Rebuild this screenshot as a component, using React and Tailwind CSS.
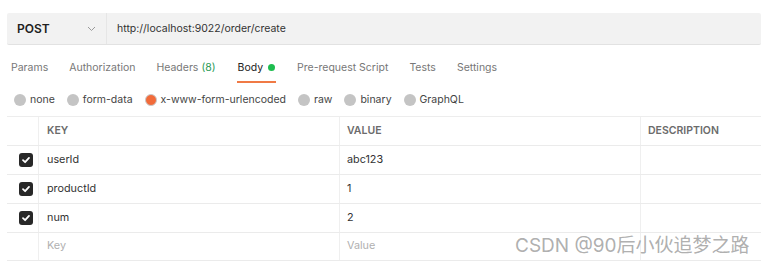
import React from "react";

const Check = () => (
  <div className="w-[14px] h-[14px] rounded-[3px] bg-[#282828] flex items-center justify-center">
    <svg width="10" height="10" viewBox="0 0 10 10" fill="none">
      <path d="M2 5.2 L4.1 7.2 L8 2.9" stroke="white" strokeWidth="1.8" strokeLinecap="round" strokeLinejoin="round" />
    </svg>
  </div>
);

const Radio = ({ label, active }) => (
  <div className="flex items-center gap-[4px]">
    {active ? (
      <div className="w-[12px] h-[12px] rounded-full bg-[#f26b3a] border border-[#c9c9c9]" />
    ) : (
      <div className="w-[12px] h-[12px] rounded-full bg-[#c4c4c4]" />
    )}
    <span>{label}</span>
  </div>
);

const rows = [
  { k: "userId", v: "abc123" },
  { k: "productId", v: "1" },
  { k: "num", v: "2" },
];

export default function App() {
  return (
    <div
      className="relative w-[766px] h-[267px] bg-white text-[#333] overflow-hidden"
      style={{ fontFamily: "Inter, 'Noto Sans', sans-serif" }}
    >
      <div className="pt-[13px] px-[7px] pr-[5px]">
        <div className="flex h-[32px] bg-[#f2f2f2] border-b border-[#e2e2e2] rounded-[2px]">
          <div className="w-[100px] flex items-center justify-between pl-[10px] pr-[10px] border-r border-[#e6e6e6]">
            <span className="text-[12px] font-semibold text-[#212121]">POST</span>
            <svg width="9" height="6" viewBox="0 0 9 6" fill="none">
              <path d="M1 1 L4.5 4.5 L8 1" stroke="#9a9a9a" strokeWidth="1" />
            </svg>
          </div>
          <div className="flex items-center pl-[10px] text-[10.5px] text-[#333]">
            http://localhost:9022/order/create
          </div>
        </div>
      </div>

      <div className="flex items-start h-[38px] pl-[11px] pt-[15px] gap-[21px] text-[10.5px] text-[#777]">
        <span>Params</span>
        <span>Authorization</span>
        <span>
          Headers <span className="text-[#2b9a56]">(8)</span>
        </span>
        <div className="flex flex-col items-stretch">
          <span className="text-[#222] flex items-center gap-[5px] px-[1px]">
            Body <span className="inline-block w-[7px] h-[7px] rounded-full bg-[#1ebd4f]" />
          </span>
          <div className="mt-[5px] h-[2px] bg-[#f07a45]" />
        </div>
        <span>Pre-request Script</span>
        <span>Tests</span>
        <span>Settings</span>
      </div>

      <div className="mt-[2px] flex items-center h-[30px] pl-[14px] gap-[12px] text-[10.5px] text-[#444]">
        <Radio label="none" />
        <Radio label="form-data" />
        <Radio label="x-www-form-urlencoded" active />
        <Radio label="raw" />
        <Radio label="binary" />
        <Radio label="GraphQL" />
      </div>

      <div className="mt-[1px] ml-[7px] mr-[5px] border-t border-[#ededed] text-[10.8px]">
        <div className="grid grid-cols-[32px_301px_301px_1fr] h-[29px] border-b border-[#ebebeb] text-[10.5px] font-semibold text-[#6b6b6b]">
          <div className="border-r border-[#efefef]" />
          <div className="flex items-center pl-[8px] border-r border-[#efefef]">KEY</div>
          <div className="flex items-center pl-[7px] border-r border-[#efefef]">VALUE</div>
          <div className="flex items-center pl-[7px]">DESCRIPTION</div>
        </div>
        {rows.map((r) => (
          <div
            key={r.k}
            className="grid grid-cols-[32px_301px_301px_1fr] h-[29px] border-b border-[#ebebeb] text-[#333]"
          >
            <div className="flex items-center justify-end pr-[5px] border-r border-[#efefef]">
              <Check />
            </div>
            <div className="flex items-center pl-[8px] border-r border-[#efefef]">{r.k}</div>
            <div className="flex items-center pl-[7px] border-r border-[#efefef]">{r.v}</div>
            <div />
          </div>
        ))}
        <div className="grid grid-cols-[32px_301px_301px_1fr] h-[28px] border-b border-[#ebebeb] text-[#b0b0b0]">
          <div className="border-r border-[#efefef]" />
          <div className="flex items-center pl-[8px] border-r border-[#efefef]">Key</div>
          <div className="flex items-center pl-[7px] border-r border-[#efefef]">Value</div>
          <div />
        </div>
      </div>

      <div
        className="absolute left-[515px] top-[232px] text-[19px] text-[#9a9a9a]/80 whitespace-nowrap"
        style={{ fontFamily: "Inter, 'Noto Sans CJK SC', sans-serif" }}
      >
        CSDN @90后小伙追梦之路
      </div>
    </div>
  );
}
